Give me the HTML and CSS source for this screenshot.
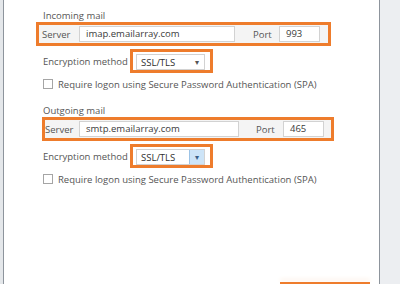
FILE: index.html
```html
<!DOCTYPE html>
<html>
<head>
<meta charset="utf-8">
<link rel="stylesheet" href="styles.css">
</head>
<body>
<div class="leftstrip"></div>
<div class="main">
  <div class="heading h1">Incoming mail</div>
  <div class="hbox box1">
    <span class="lbl">Server</span>
    <span class="input srv">imap.emailarray.com</span>
    <span class="lbl port">Port</span>
    <span class="input prt">993</span>
  </div>
  <div class="encrow">
    <span class="lbl enc">Encryption method</span>
    <div class="dbox">
      <div class="select"><span class="val">SSL/TLS</span><span class="arrow">&#9662;</span></div>
    </div>
  </div>
  <div class="chkrow"><span class="chk"></span><span class="lbl">Require logon using Secure Password Authentication (SPA)</span></div>

  <div class="heading h2">Outgoing mail</div>
  <div class="hbox box2">
    <span class="lbl">Server</span>
    <span class="input srv2">smtp.emailarray.com</span>
    <span class="lbl port2">Port</span>
    <span class="input prt">465</span>
  </div>
  <div class="encrow">
    <span class="lbl enc">Encryption method</span>
    <div class="dbox">
      <div class="select"><span class="val">SSL/TLS</span><span class="arrow hot">&#9662;</span></div>
    </div>
  </div>
  <div class="chkrow"><span class="chk"></span><span class="lbl">Require logon using Secure Password Authentication (SPA)</span></div>

  <div class="spacer"></div>
  <div class="btnline"></div>
</div>
<div class="rightstrip"></div>
</body>
</html>
```
FILE: styles.css
```css
html, body {
  margin: 0;
  padding: 0;
}
body {
  width: 400px;
  height: 284px;
  overflow: hidden;
  display: flex;
  background: #ffffff;
  font-family: "Open Sans", "Noto Sans", sans-serif;
  font-size: 9.5px;
  color: #555555;
}
.leftstrip {
  width: 3px;
  background: #e4e7ea;
  border-right: 1px solid #8d949c;
}
.rightstrip {
  width: 20px;
  background: #eceef1;
  border-left: 1px solid #8d949c;
}
.main {
  flex: 1;
  display: flex;
  flex-direction: column;
  padding-left: 32px;
}
.heading {
  height: 12px;
  line-height: 12px;
  padding-left: 7px;
}
.h1 { margin-top: 10px; }
.h2 { margin-top: 15px; }
.hbox {
  box-sizing: border-box;
  height: 24px;
  border: 3px solid #ee7c2c;
  background: #f4f4f4;
  display: flex;
  align-items: center;
}
.box1 { width: 295px; }
.box2 { width: 292px; margin-left: 6px; }
.lbl { white-space: nowrap; }
.hbox .lbl:first-child { padding-left: 3px; width: 37px; }
.box2 .lbl:first-child { padding-left: 0; width: 34px; }
.input {
  box-sizing: border-box;
  height: 16px;
  line-height: 14px;
  background: #fff;
  border: 1px solid #d2d2d2;
  padding-left: 6px;
  color: #3a3a3a;
}
.srv { width: 156px; }
.srv2 { width: 160px; }
.port { margin-left: 18px; width: 26px; }
.port2 { margin-left: 17px; width: 27px; }
.prt { width: 41px; }
.encrow {
  display: flex;
  align-items: center;
  height: 24px;
  margin-top: 3px;
  padding-left: 7px;
}
.enc { width: 87px; }
.dbox {
  box-sizing: border-box;
  width: 83px;
  height: 24px;
  border: 3px solid #ee7c2c;
  padding: 2px 5px 0 3px;
}
.select {
  box-sizing: border-box;
  height: 16px;
  border: 1px solid #d2d2d2;
  background: #fff;
  display: flex;
  align-items: center;
  justify-content: space-between;
  color: #2e2e2e;
}
.val { padding-left: 4px; }
.arrow {
  width: 15px;
  height: 14px;
  line-height: 14px;
  text-align: center;
  font-size: 8px;
  color: #555;
}
.arrow.hot {
  background: #cde4f7;
  color: #3b5f86;
  box-shadow: inset 1px 0 0 #9cc3e6;
}
.chkrow {
  display: flex;
  align-items: center;
  height: 12px;
  margin-top: 5px;
  padding-left: 7px;
}
.chk {
  box-sizing: border-box;
  width: 10px;
  height: 10px;
  border: 1px solid #a5a5a5;
  background: #fff;
  margin-right: 5px;
}
.spacer { flex: 1; }
.btnline {
  width: 90px;
  height: 2px;
  margin-left: 244px;
  background: #ee7c2c;
  box-shadow: 0 -3px 4px #fbeee3;
}
```
